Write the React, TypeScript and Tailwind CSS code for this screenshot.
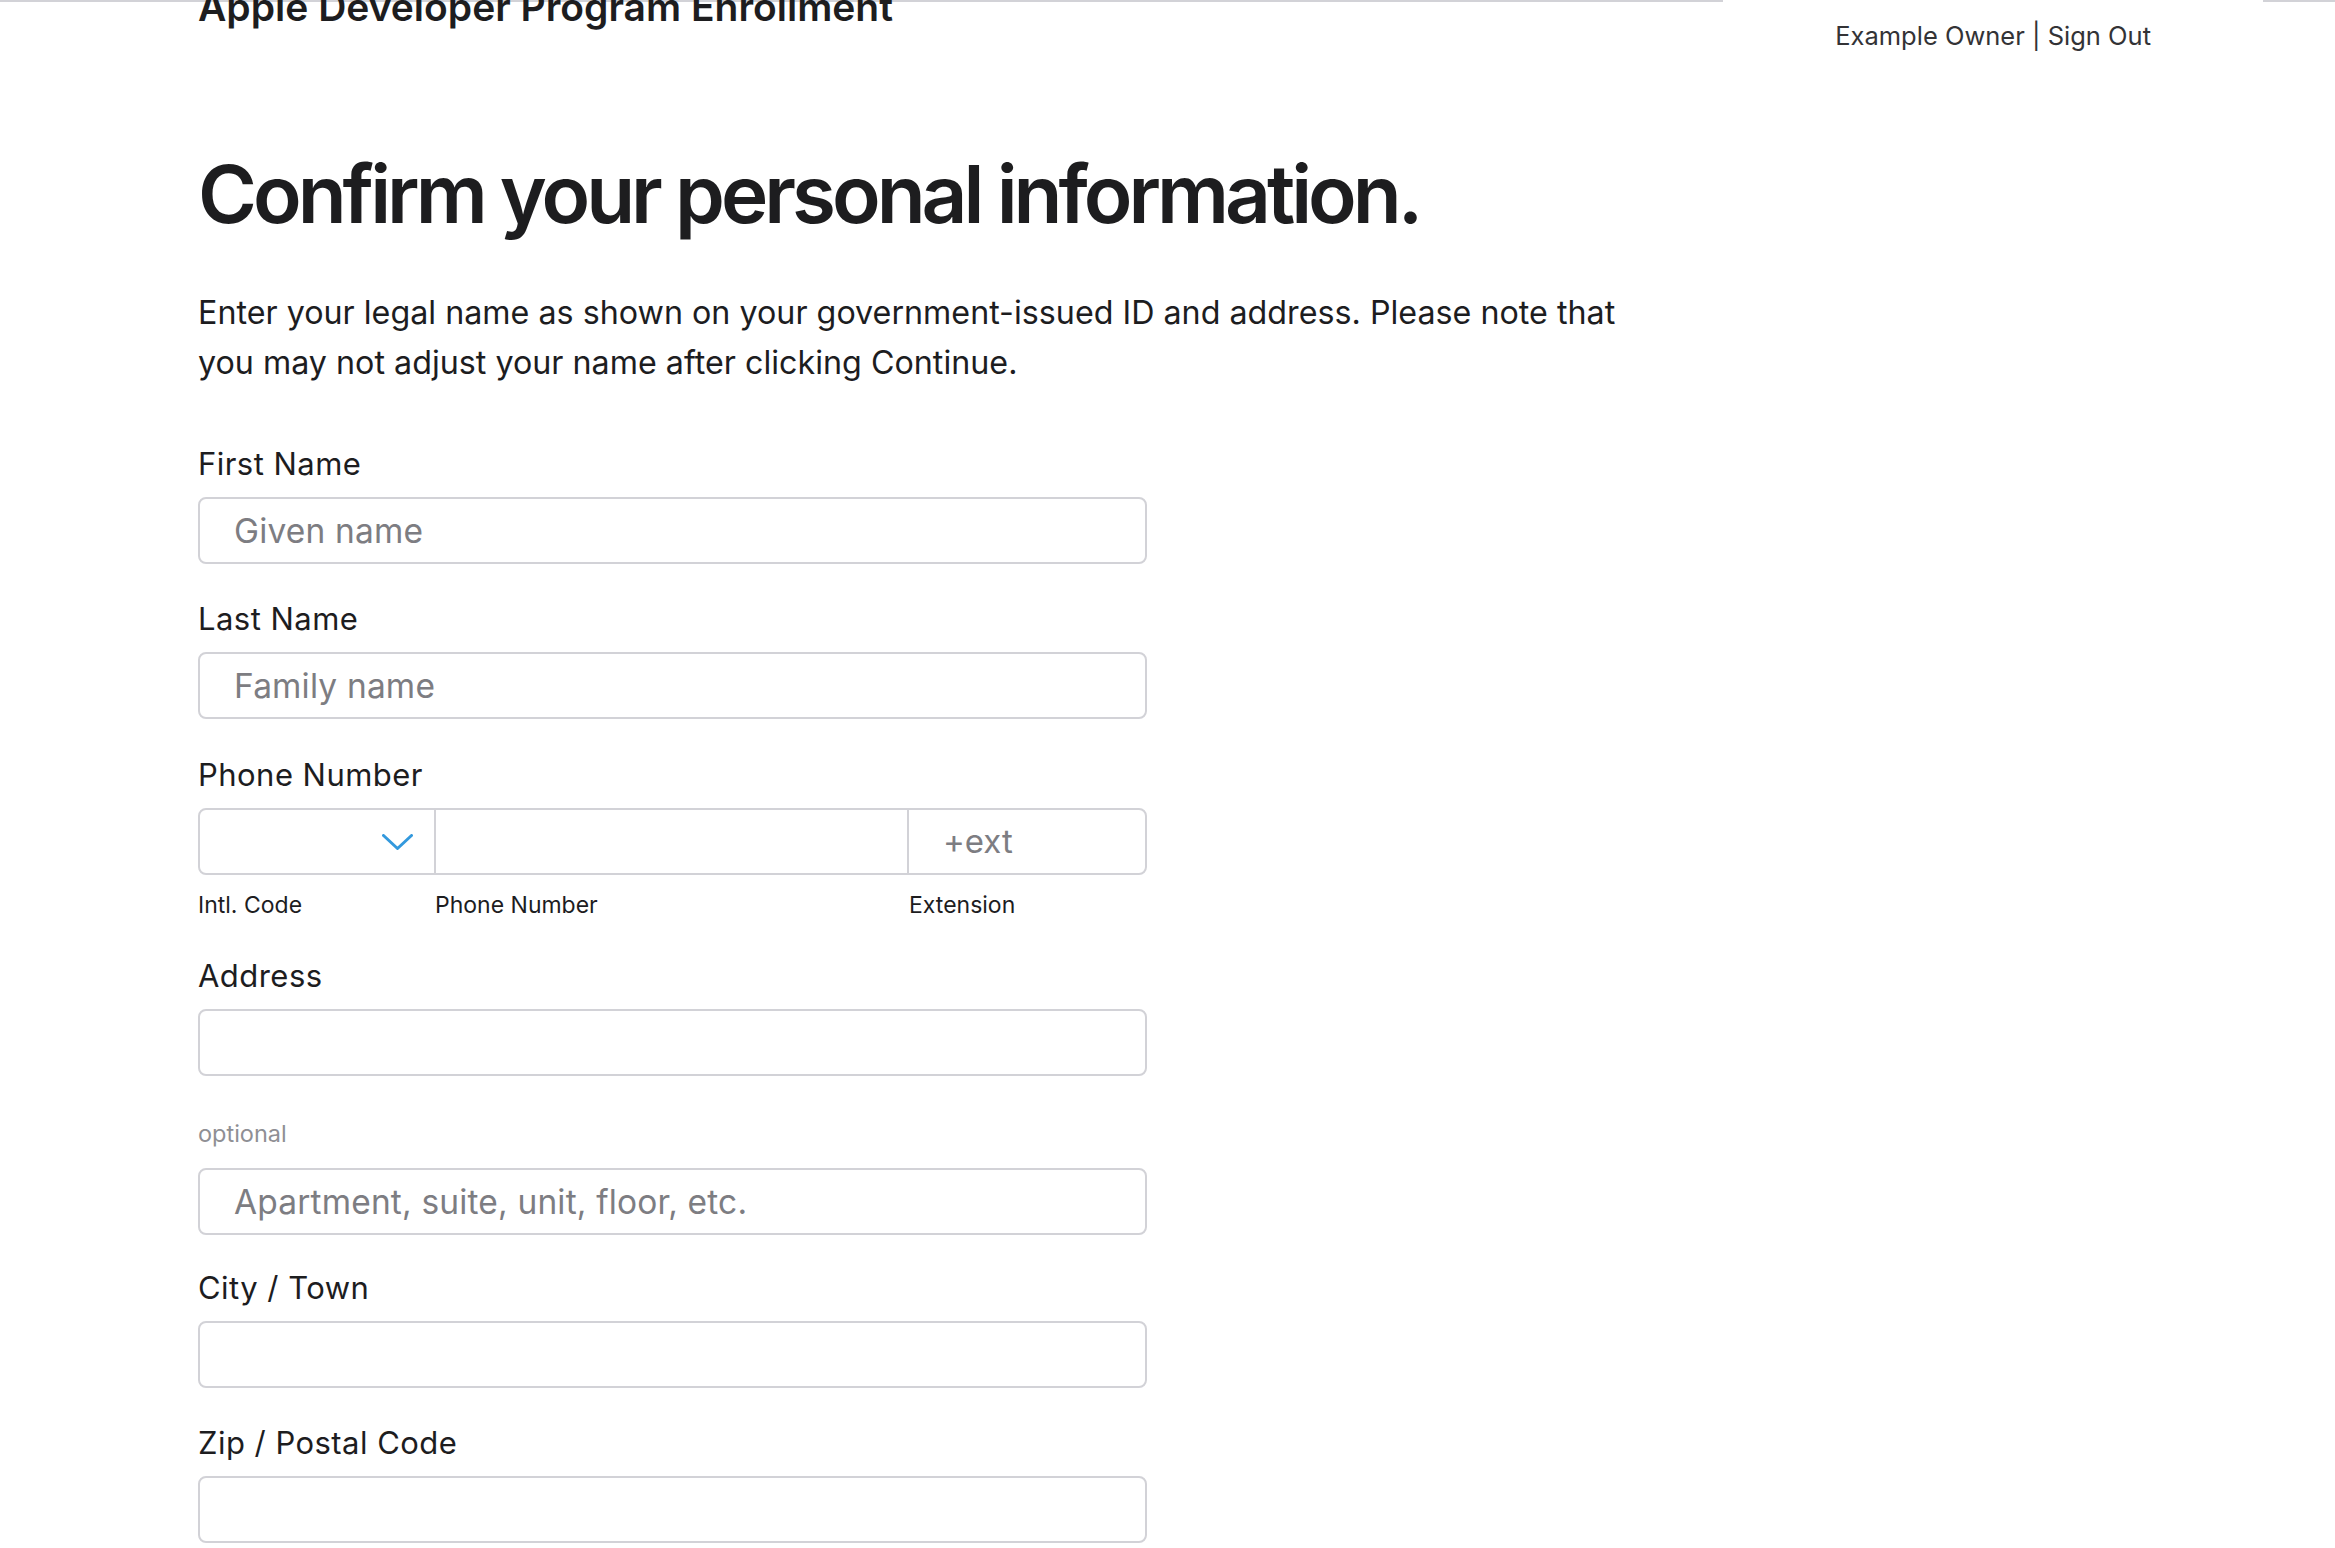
import React from 'react'

const fields = {
  label: 'block text-[31px] leading-[30px] tracking-[0.015em] text-[#1d1d1f]',
  input:
    'block w-full h-[67px] rounded-[8px] border-2 border-[#d2d2d7] bg-white pl-[34px] text-[33.5px] tracking-[0.005em] text-[#1d1d1f] outline-none placeholder:text-[#7d7d82]',
}

function Field({
  label,
  placeholder,
  className,
}: {
  label: string
  placeholder?: string
  className?: string
}) {
  return (
    <div className={className}>
      <label className={fields.label}>{label}</label>
      <input type="text" placeholder={placeholder} className={`mt-[18px] ${fields.input}`} />
    </div>
  )
}

function Chevron() {
  return (
    <svg width="31" height="16" viewBox="0 0 31 16" fill="none">
      <polyline
        points="1.5,1.5 15.5,14.5 29.5,1.5"
        stroke="#3399dd"
        strokeWidth="3"
        strokeLinecap="round"
        strokeLinejoin="round"
      />
    </svg>
  )
}

export default function App() {
  return (
    <div className="h-[1548px] overflow-hidden bg-white text-[#1d1d1f] font-['Inter','Noto_Sans',sans-serif]">
      {/* top rule, broken where the account links sit */}
      <div className="flex h-[2px]">
        <div className="w-[1723px] bg-[#d2d2d7]" />
        <div className="flex-1" />
        <div className="w-[72px] bg-[#d2d2d7]" />
      </div>

      {/* Header */}
      <header className="flex items-start justify-between pl-[198px] pr-[184px]">
        <div className="-mt-[15px] text-[39px] leading-[39px] font-semibold">
          Apple Developer Program Enrollment
        </div>
        <div className="mt-[21px] text-[25.5px] leading-[26px] text-[#333336]">
          Example Owner | Sign Out
        </div>
      </header>

      <main className="pl-[198px]">
        <h1 className="mt-[105px] text-[80px] leading-[80px] font-semibold tracking-[-0.05em]">
          Confirm your personal information.
        </h1>
        <p className="mt-[54px] text-[32.25px] leading-[50px]">
          Enter your legal name as shown on your government-issued ID and address. Please note that
          <br />
          you may not adjust your name after clicking Continue.
        </p>

        <form className="w-[949px]">
          <Field className="mt-[61px]" label="First Name" placeholder="Given name" />
          <Field className="mt-[40px]" label="Last Name" placeholder="Family name" />

          {/* Phone */}
          <div className="mt-[41px]">
            <label className={fields.label}>Phone Number</label>
            <div className="mt-[18px] flex h-[67px] rounded-[8px] border-2 border-[#d2d2d7] bg-white">
              <div className="flex w-[236px] items-center justify-end border-r-2 border-[#d2d2d7] pr-[21px]">
                <Chevron />
              </div>
              <input type="text" className="w-[473px] border-r-2 border-[#d2d2d7] bg-transparent outline-none" />
              <input
                type="text"
                placeholder="+ext"
                className="min-w-0 flex-1 bg-transparent pl-[34px] text-[33px] outline-none placeholder:text-[#7d7d82]"
              />
            </div>
            <div className="mt-[19px] flex text-[23px] leading-[22px] text-[#1d1d1f]">
              <span className="w-[237px]">Intl. Code</span>
              <span className="w-[474px]">Phone Number</span>
              <span>Extension</span>
            </div>
          </div>

          <Field className="mt-[45px]" label="Address" />

          <div className="mt-[47px] text-[23.5px] leading-[22px] text-[#8f8f94]">optional</div>
          <input
            type="text"
            placeholder="Apartment, suite, unit, floor, etc."
            className={`mt-[23px] ${fields.input}`}
          />

          <Field className="mt-[38px]" label="City / Town" />
          <Field className="mt-[40px]" label="Zip / Postal Code" />
        </form>
      </main>
    </div>
  )
}
